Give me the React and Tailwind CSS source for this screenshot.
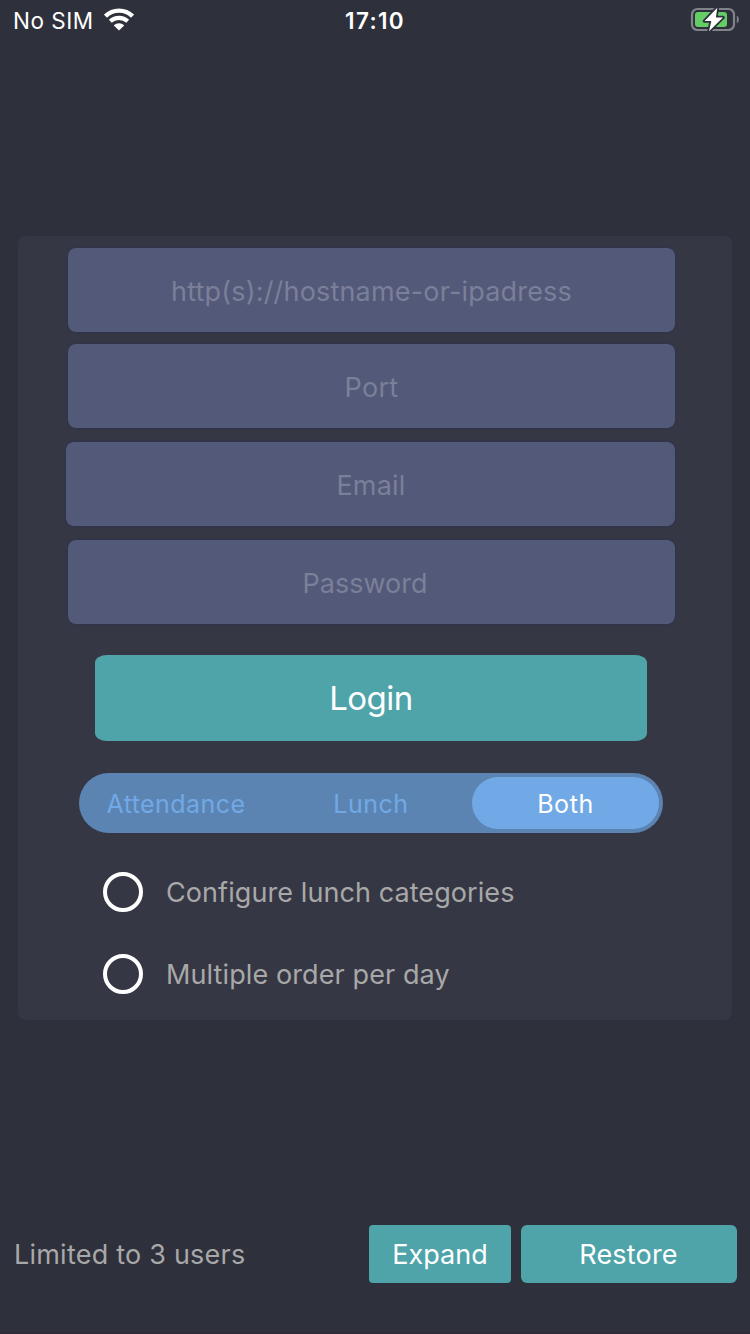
import React from "react";

function WifiIcon() {
  return (
    <svg className="-mt-px block h-[23px] w-[30px]" viewBox="0 0 30 23" fill="none">
      <path d="M1.500 8.200C8.900 0.800 21.100 0.800 28.500 8.200" stroke="#fff" strokeWidth="4.400" />
      <path d="M6.300 13.300C11.200 8.700 18.800 8.700 23.700 13.300" stroke="#fff" strokeWidth="4.200" />
      <path d="M15 22.600L9.800 17.400C12.700 14.600 17.300 14.600 20.200 17.400Z" fill="#fff" />
    </svg>
  );
}

function BatteryIcon() {
  return (
    <svg className="-mt-[2px] block h-[26px] w-[50px]" viewBox="0 0 50 26">
      <rect x="2" y="3" width="42" height="21" rx="5.500" fill="none" stroke="#81828a" strokeWidth="2.200" />
      <rect x="5" y="6" width="32" height="15" rx="3" fill="#65cd66" />
      <path d="M46.800 9.700C49.600 10.900 49.600 16.100 46.800 17.300Z" fill="#81828a" />
      <path
        d="M27.300 1.800L14.600 14.900H21.300L19 25.200L33 11.500H25.900Z"
        fill="#fff"
        stroke="#2e303b"
        strokeWidth="3.600"
        strokeLinejoin="round"
        paintOrder="stroke"
      />
    </svg>
  );
}

function Field({ className, textClass, label }) {
  return (
    <div
      className={
        "flex h-[84px] items-center justify-center rounded-[8px] bg-[#535978] pt-[3px] text-[27px] leading-none text-[#7b7f99] shadow-[0_0_0_1.5px_#313549] " +
        className
      }
    >
      <span className={"whitespace-nowrap " + textClass}>{label}</span>
    </div>
  );
}

function Option({ label, textClass }) {
  return (
    <div className="flex h-10 items-center gap-[23px]">
      <span className="size-10 rounded-full border-4 border-white" />
      <span className={"whitespace-nowrap pt-px text-[27px] leading-none text-[#a8a8a8] " + textClass}>{label}</span>
    </div>
  );
}

export default function App() {
  return (
    <div className="flex h-[1334px] w-[750px] flex-col overflow-hidden border-b-2 border-[#2f2c38] bg-[#2e303b] font-['Inter','Liberation_Sans',sans-serif] text-white">
      <header className="grid h-10 grid-cols-[1fr_auto_1fr] items-center px-[10px] text-[22.500px] leading-none">
        <div className="flex items-center gap-[10px] pl-[3px]">
          <span className="whitespace-nowrap pt-[3px] tracking-[0.5px]">No SIM</span>
          <WifiIcon />
        </div>
        <span className="pt-[3px] font-semibold tracking-[1.300px]">17:10</span>
        <div className="flex justify-end">
          <BatteryIcon />
        </div>
      </header>

      <main className="mx-[18px] mt-[196px] h-[784px] shrink-0 rounded-[8px] bg-[#363744] pt-3">
        <Field className="ml-[50px] mr-[57px]" textClass="tracking-[0.180px]" label="http(s)://hostname-or-ipadress" />
        <Field className="ml-[50px] mr-[57px] mt-3" textClass="tracking-[0.300px]" label="Port" />
        <Field className="ml-[48px] mr-[57px] mt-[14px]" textClass="ml-px tracking-[0.200px]" label="Email" />
        <Field className="ml-[50px] mr-[57px] mt-[14px]" textClass="mr-[13px]" label="Password" />

        <button className="ml-[77px] mt-[31px] flex h-[86px] w-[552px] items-center justify-center rounded-[12px/8px] bg-[#4ea4a9] text-[33px] leading-none">
          <span className="tracking-[-0.500px]">Login</span>
        </button>

        <div className="ml-[61px] mt-8 flex h-[60px] w-[584px] items-center rounded-full bg-[#5c84b2] py-1 pr-1 text-[25px] leading-none text-[#71a9e6]">
          <span className="w-[194px] pt-[2px] text-center tracking-[0.450px]">Attendance</span>
          <span className="w-[196px] pt-[2px] text-center tracking-[0.500px]">Lunch</span>
          <span className="ml-[3px] flex h-[52px] w-[187px] items-center justify-center rounded-full bg-[#71a9e6] pt-[2px] tracking-[0.600px] text-white">
            Both
          </span>
        </div>

        <div className="ml-[85px] mt-[39px] flex flex-col gap-[42px]">
          <Option label="Configure lunch categories" textClass="tracking-[0.080px]" />
          <Option label="Multiple order per day" textClass="tracking-[0.100px]" />
        </div>
      </main>

      <footer className="mt-[205px] flex h-[58px] shrink-0 items-center pl-[14px] pr-[13px] text-[27px] leading-none">
        <span className="flex-1 whitespace-nowrap tracking-[0.220px] text-[#a8a8a8]">Limited to 3 users</span>
        <button className="h-full w-[142px] rounded-[4px] bg-[#4ea4a9]">Expand</button>
        <button className="ml-[10px] h-full w-[216px] rounded-[6px] bg-[#4ea4a9] pr-px tracking-[0.200px]">Restore</button>
      </footer>
    </div>
  );
}
